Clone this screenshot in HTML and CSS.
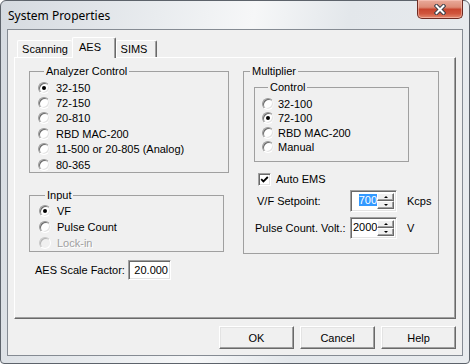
FILE: index.html
```html
<!DOCTYPE html>
<html>

<head>
  <meta charset="UTF-8">
  <title>System Properties</title>
  <link rel="stylesheet" href="styles.css">
</head>

<body>

  <div class="window">
    <div class="titlebar">
      <span class="title">System Properties</span>
      <button class="close" type="button">
        <svg width="12" height="11" viewBox="0 0 12 11">
          <path d="M2.5 2 L9.5 9 M9.5 2 L2.5 9" stroke="#3a3f48" stroke-width="4" stroke-linecap="square" fill="none" />
          <path d="M2.5 2 L9.5 9 M9.5 2 L2.5 9" stroke="#fff" stroke-width="2" stroke-linecap="square" fill="none" />
        </svg>
      </button>
    </div>

    <div class="client">
      <div class="tabs">
        <div class="tab tab-scanning">Scanning</div>
        <div class="tab tab-aes active">AES</div>
        <div class="tab tab-sims">SIMS</div>
      </div>

      <div class="panel">
        <div class="col-left">
          <fieldset class="group analyzer">
            <legend>Analyzer Control</legend>
            <div class="radio checked"><span class="dot"></span>32-150</div>
            <div class="radio"><span class="dot"></span>72-150</div>
            <div class="radio"><span class="dot"></span>20-810</div>
            <div class="radio"><span class="dot"></span>RBD MAC-200</div>
            <div class="radio"><span class="dot"></span>11-500 or 20-805 (Analog)</div>
            <div class="radio"><span class="dot"></span>80-365</div>
          </fieldset>

          <fieldset class="group input-group">
            <legend>Input</legend>
            <div class="radio checked"><span class="dot"></span>VF</div>
            <div class="radio"><span class="dot"></span>Pulse Count</div>
            <div class="radio disabled"><span class="dot"></span>Lock-in</div>
          </fieldset>

          <div class="scale-row">
            <span class="scale-label">AES Scale Factor:</span>
            <span class="textbox">20.000</span>
          </div>
        </div>

        <fieldset class="group multiplier">
          <legend>Multiplier</legend>

          <fieldset class="group control">
            <legend>Control</legend>
            <div class="radio"><span class="dot"></span>32-100</div>
            <div class="radio checked"><span class="dot"></span>72-100</div>
            <div class="radio"><span class="dot"></span>RBD MAC-200</div>
            <div class="radio"><span class="dot"></span>Manual</div>
          </fieldset>

          <div class="check">
            <span class="box">
              <svg width="9" height="9" viewBox="0 0 9 9">
                <path d="M1.2 4.2 L3.4 6.4 L7.8 2" stroke="#000" stroke-width="1.8" fill="none" />
              </svg>
            </span>
            Auto EMS
          </div>

          <div class="spin-row vf">
            <span class="spin-label">V/F Setpoint:</span>
            <span class="spinbox">
              <span class="spin-value"><span class="selected">700</span></span>
              <span class="spin-buttons">
                <span class="spin-btn"><span class="arrow up"></span></span>
                <span class="spin-btn"><span class="arrow down"></span></span>
              </span>
            </span>
            <span class="unit">Kcps</span>
          </div>

          <div class="spin-row pulse">
            <span class="spin-label">Pulse Count. Volt.:</span>
            <span class="spinbox">
              <span class="spin-value"><span>2000</span></span>
              <span class="spin-buttons">
                <span class="spin-btn"><span class="arrow up"></span></span>
                <span class="spin-btn"><span class="arrow down"></span></span>
              </span>
            </span>
            <span class="unit">V</span>
          </div>
        </fieldset>
      </div>

      <div class="buttons">
        <button class="btn" type="button">OK</button>
        <button class="btn" type="button">Cancel</button>
        <button class="btn" type="button">Help</button>
      </div>
    </div>
  </div>

</body>

</html>
```

FILE: styles.css
```css
* {
  box-sizing: border-box;
}

body {
  margin: 0;
  background-color: #fff;
  font-family: "Liberation Sans", Arial, sans-serif;
  font-size: 11px;
  color: #000;
}

/* window frame */
.window {
  width: 470px;
  height: 364px;
  border: 1px solid #5d636b;
  border-radius: 6px 6px 4px 4px;
  background: linear-gradient(100deg, #d5dae0 0%, #e9ecef 30%, #f6f7f8 48%, #e3e7eb 66%, #e9ecef 100%);
  padding: 0 6px 7px 6px;
  display: flex;
  flex-direction: column;
}

.titlebar {
  height: 28px;
  display: flex;
  justify-content: space-between;
  align-items: flex-start;
}

.title {
  margin: 7px 0 0 1px;
  font-family: "Noto Sans", "Open Sans", sans-serif;
  font-size: 12px;
  line-height: 16px;
}

.close {
  width: 46px;
  height: 19px;
  margin: -1px 0 0 0;
  padding: 0;
  border: 1px solid #6e2b22;
  border-top: none;
  border-radius: 0 0 5px 5px;
  background: linear-gradient(#e9ab9b 0%, #dd8b76 40%, #c8462f 52%, #d0553c 75%, #e28a6f 100%);
  box-shadow: inset 0 0 0 1px rgba(255, 210, 200, 0.5);
  display: flex;
  align-items: center;
  justify-content: center;
}

.client {
  height: 327px;
  border: 1px solid #858b93;
  background-color: #f0f0f0;
  padding: 7px 6px 6px 6px;
  display: flex;
  flex-direction: column;
}

/* tabs */
.tabs {
  height: 20px;
  padding-left: 3px;
  display: flex;
  align-items: flex-end;
}

.tab {
  height: 17px;
  line-height: 16px;
  text-align: center;
  background-color: #f0f0f0;
  border: 1px solid #fff;
  border-right-color: #696969;
  border-bottom: none;
  border-radius: 2px 2px 0 0;
  box-shadow: inset -1px 0 0 #a0a0a0;
}

.tab-scanning {
  width: 55px;
  border-right: none;
  box-shadow: none;
}

.tab-aes {
  width: 44px;
  padding-right: 8px;
}

.tab-sims {
  width: 41px;
  padding-right: 5px;
}

.tab.active {
  height: 21px;
  line-height: 19px;
  margin-bottom: -1px;
  position: relative;
  z-index: 1;
}

.panel {
  height: 262px;
  border: 1px solid #fff;
  border-right-color: #696969;
  border-bottom-color: #696969;
  box-shadow: inset -1px -1px 0 #a0a0a0;
  padding: 7px 0 0 14px;
  display: grid;
  grid-template-columns: 200px 196px;
  column-gap: 14px;
  align-items: start;
}

/* group boxes */
.group {
  margin: 0;
  padding: 0;
  min-width: 0;
  border: 1px solid #a0a0a0;
}

.group legend {
  margin-left: 6px;
  padding: 0 2px;
  line-height: 13px;
}

.radio {
  display: flex;
  align-items: center;
  gap: 6px;
  white-space: nowrap;
}

.dot {
  width: 12px;
  height: 12px;
  flex: none;
  border-radius: 50%;
  border: 1px solid;
  border-color: #9a9a9a #f4f4f4 #fff #9a9a9a;
  background-color: #fff;
  box-shadow: inset 1px 1px 0 #6b6b6b, inset -1px -1px 0 #e3e3e3;
  display: flex;
  align-items: center;
  justify-content: center;
}

.radio.checked .dot::after {
  content: "";
  width: 4px;
  height: 4px;
  border-radius: 50%;
  background-color: #000;
}

.radio.disabled {
  color: #a0a0a0;
  text-shadow: 1px 1px 0 #fff;
}

.radio.disabled .dot {
  background-color: #f0f0f0;
  border-color: #c8c8c8 #fff #fff #c8c8c8;
  box-shadow: inset 1px 1px 0 #b4b4b4;
}

.analyzer {
  width: 200px;
  padding: 2px 0 0 8px;
}

.analyzer .radio {
  height: 15.4px;
}

.input-group {
  width: 195px;
  margin-top: 16px;
  padding: 1px 0 0 9px;
}

.input-group .radio {
  height: 16px;
}

.scale-row {
  margin-top: 8px;
  padding-left: 6px;
  display: flex;
  align-items: center;
}

.scale-label {
  width: 93px;
}

.textbox {
  width: 43px;
  height: 20px;
  padding: 2px 2px 0 0;
  text-align: right;
  line-height: 15px;
  background-color: #fff;
  border: 1px solid;
  border-color: #a0a0a0 #fff #fff #a0a0a0;
  box-shadow: inset 1px 1px 0 #696969, inset -1px -1px 0 #e3e3e3;
}

.multiplier {
  width: 196px;
  padding: 0 0 14px 0;
}

.control {
  width: 155px;
  margin: 3px 0 0 10px;
  padding: 3px 0 7px 7px;
}

.control .radio {
  height: 14.3px;
  gap: 4px;
}

.check {
  height: 16px;
  margin-top: 9px;
  padding-left: 14px;
  display: flex;
  align-items: center;
  gap: 5px;
}

.box {
  width: 13px;
  height: 13px;
  background-color: #fff;
  border: 1px solid;
  border-color: #a0a0a0 #fff #fff #a0a0a0;
  box-shadow: inset 1px 1px 0 #696969, inset -1px -1px 0 #e3e3e3;
  display: flex;
  align-items: center;
  justify-content: center;
}

/* spin boxes */
.spin-row {
  padding-left: 11px;
  display: grid;
  grid-template-columns: 85px 47px auto;
  column-gap: 10px;
  align-items: center;
  white-space: nowrap;
}

.spin-row.vf {
  margin-top: 3px;
}

.spin-row.vf .spin-label {
  padding-left: 2px;
}

.spin-row.pulse {
  margin-top: 5px;
}

.spinbox {
  height: 22px;
  padding: 2px;
  background-color: #fff;
  border: 1px solid;
  border-color: #a0a0a0 #fff #fff #a0a0a0;
  box-shadow: inset 1px 1px 0 #696969, inset -1px -1px 0 #e3e3e3;
  display: flex;
}

.spin-value {
  flex: 1;
  display: flex;
  justify-content: flex-end;
  align-items: flex-start;
  padding-top: 1px;
  line-height: 12px;
}

.spin-value .selected {
  background-color: #3399ff;
  color: #fff;
}

.spin-buttons {
  width: 17px;
  display: flex;
  flex-direction: column;
}

.spin-btn {
  flex: 1;
  background-color: #f0f0f0;
  border: 1px solid;
  border-color: #fff #696969 #696969 #fff;
  box-shadow: inset -1px -1px 0 #a0a0a0;
  display: flex;
  align-items: center;
  justify-content: center;
}

.arrow {
  width: 0;
  height: 0;
  border-left: 2px solid transparent;
  border-right: 2px solid transparent;
}

.arrow.up {
  border-bottom: 2px solid #000;
}

.arrow.down {
  border-top: 2px solid #000;
}

/* dialog buttons */
.buttons {
  margin-top: 7px;
  display: flex;
  justify-content: flex-end;
  gap: 6px;
}

.btn {
  width: 75px;
  height: 23px;
  padding: 0;
  font-family: "Liberation Sans", Arial, sans-serif;
  font-size: 11px;
  color: #000;
  background-color: #f0f0f0;
  border: 1px solid;
  border-color: #fff #696969 #696969 #fff;
  box-shadow: inset -1px -1px 0 #a0a0a0, inset 1px 1px 0 #e3e3e3;
}
```
